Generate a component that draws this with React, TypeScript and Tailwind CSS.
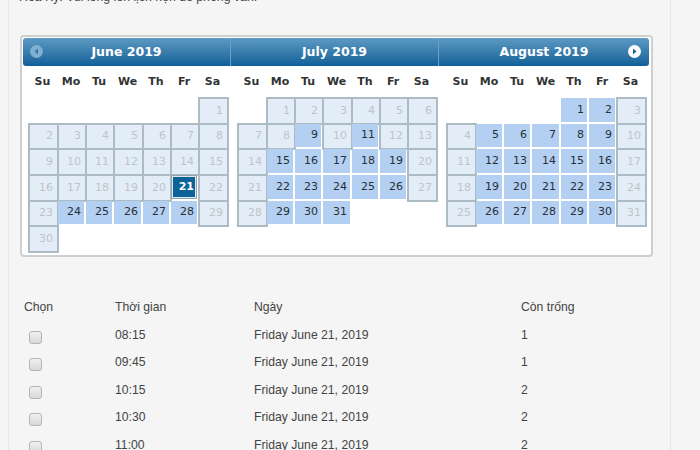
const weekDays = ["Su", "Mo", "Tu", "We", "Th", "Fr", "Sa"]

const months = [
  { title: "June 2019", start: 6, days: 30, open: [24, 25, 26, 27, 28], selected: 21 },
  {
    title: "July 2019",
    start: 1,
    days: 31,
    open: [9, 11, 15, 16, 17, 18, 19, 22, 23, 24, 25, 26, 29, 30, 31],
    selected: 0,
  },
  {
    title: "August 2019",
    start: 4,
    days: 31,
    open: [1, 2, 5, 6, 7, 8, 9, 12, 13, 14, 15, 16, 19, 20, 21, 22, 23, 26, 27, 28, 29, 30],
    selected: 0,
  },
]

const slots = [
  { time: "08:15", free: 1 },
  { time: "09:45", free: 1 },
  { time: "10:15", free: 2 },
  { time: "10:30", free: 2 },
  { time: "11:00", free: 2 },
]

const Day = ({ day, open, selected }: { day: number; open: boolean; selected: boolean }) => {
  if (selected) {
    return (
      <div className="m-[1px] flex items-center justify-end border border-[#8fa3b0] bg-[#0b6398] pr-[2px] font-bold text-white outline outline-1 -outline-offset-2 outline-[#dfe8ef]">
        {day}
      </div>
    )
  }
  if (open) {
    return (
      <div className="m-[1px] flex items-center justify-end bg-[#b3d0f3] pr-[3px] text-[#2b2f33]">
        {day}
      </div>
    )
  }
  return (
    <div className="mr-[-2px] mb-[-2px] flex items-center justify-end border-2 border-[#adbcc4] bg-[#e3edf8] pr-[4px] text-[#c0c4c8]">
      {day}
    </div>
  )
}

const Month = ({ month }: { month: (typeof months)[number] }) => (
  <div className="w-[199px]">
    <div className="grid h-[31px] grid-cols-[29px_28px_28px_29px_28px_28px_29px] items-center pt-[2px] text-center font-bold text-[#333]">
      {weekDays.map((d) => (
        <span key={d}>{d}</span>
      ))}
    </div>
    <div className="grid grid-cols-[29px_28px_28px_29px_28px_28px_29px] auto-rows-[25.7px]">
      {Array.from({ length: month.start }).map((_, i) => (
        <div key={i} />
      ))}
      {Array.from({ length: month.days }).map((_, i) => (
        <Day
          key={i}
          day={i + 1}
          open={month.open.includes(i + 1)}
          selected={month.selected === i + 1}
        />
      ))}
    </div>
  </div>
)

const App = () => {
  return (
    <div className="h-[450px] w-[700px] overflow-hidden bg-[#f5f5f5] pl-[8px] font-['Liberation_Sans',sans-serif]">
      <div className="flex h-full w-[663px] flex-col border-x border-[#e6e6e6] pl-[11px]">
        <p className="mt-[-11px] -ml-px text-[12.3px] leading-[16px] text-[#444]">
          Hoa Kỳ. Vui lòng lên lịch hẹn để phỏng vấn.
        </p>
        <div className="mt-[30px] h-[222px] w-[633px] shrink-0 rounded border-2 border-[#cfcfcf] bg-white pt-px pl-px font-['DejaVu_Sans',sans-serif] text-[11px]">
          <div className="flex h-[28px] w-[626px] rounded-[3px] bg-gradient-to-b from-[#5c9ac2] to-[#0b6098] text-[12.5px] font-bold text-white">
            <div className="relative flex w-[208px] items-center justify-center border-r border-[#6d9fc0]">
              <svg className="absolute top-[7px] left-[7px]" width="13" height="13" viewBox="0 0 13 13">
                <circle cx="6.5" cy="6.5" r="6.5" fill="#7fb0d2" />
                <path d="M8 3.5 4.5 6.5 8 9.5z" fill="#2f7dad" />
              </svg>
              June 2019
            </div>
            <div className="flex w-[208px] items-center justify-center border-r border-[#6d9fc0]">
              July 2019
            </div>
            <div className="relative flex w-[210px] items-center justify-center">
              August 2019
              <svg className="absolute top-[7px] right-[8px]" width="13" height="13" viewBox="0 0 13 13">
                <circle cx="6.5" cy="6.5" r="6.5" fill="#ffffff" />
                <path d="M5 3.5 8.5 6.5 5 9.5z" fill="#14669c" />
              </svg>
            </div>
          </div>
          <div className="flex gap-[10px] pl-[5px]">
            {months.map((m) => (
              <Month key={m.title} month={m} />
            ))}
          </div>
        </div>
        <table className="mt-[37px] table-fixed text-[12.2px] text-[#444]">
          <thead>
            <tr className="h-[27px] text-left">
              <th className="w-[95px] pl-[4px] font-normal">Chọn</th>
              <th className="w-[139px] font-normal">Thời gian</th>
              <th className="w-[267px] font-normal">Ngày</th>
              <th className="font-normal">Còn trống</th>
            </tr>
          </thead>
          <tbody>
            {slots.map((s) => (
              <tr key={s.time} className="h-[27.5px]">
                <td className="pt-[5px] pl-[9px] align-middle">
                  <div className="h-[13px] w-[13px] rounded-[3px] border border-[#b5b5b5] bg-gradient-to-b from-[#f0f0f0] to-[#d8d8d8]" />
                </td>
                <td>{s.time}</td>
                <td>Friday June 21, 2019</td>
                <td>{s.free}</td>
              </tr>
            ))}
          </tbody>
        </table>
      </div>
    </div>
  )
}

export default App
